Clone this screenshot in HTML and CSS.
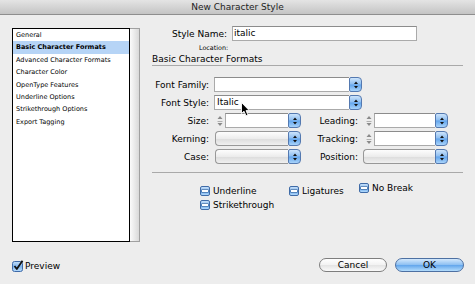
FILE: index.html
```html
<!DOCTYPE html>
<html>
<head>
<meta charset="utf-8">
<title>New Character Style</title>
<link rel="stylesheet" href="styles.css">
</head>
<body>
<div class="window">
  <div class="titlebar">New Character Style</div>
  <div class="content">
    <div class="listbox">
      <ul class="list">
        <li>General</li>
        <li class="sel">Basic Character Formats</li>
        <li>Advanced Character Formats</li>
        <li>Character Color</li>
        <li>OpenType Features</li>
        <li>Underline Options</li>
        <li>Strikethrough Options</li>
        <li>Export Tagging</li>
      </ul>
      <div class="track"></div>
    </div>
    <div class="main">
      <div class="name-row">
        <span class="name-label">Style Name:</span>
        <div class="textfield name-field">italic</div>
      </div>
      <div class="location">Location:</div>
      <div class="section-title">Basic Character Formats</div>
      <div class="form">
        <div class="row">
          <span class="lbl">Font Family:</span>
          <div class="combo wide"><div class="combo-body"></div><span class="arrow-btn"><svg width="4" height="8" viewBox="0 0 4 8"><path d="M2 0.5L4 3H0Z M2 7.5L0 5H4Z" fill="#111"/></svg></span></div>
        </div>
        <div class="row">
          <span class="lbl">Font Style:</span>
          <div class="combo wide"><div class="combo-body">Italic</div><span class="arrow-btn"><svg width="4" height="8" viewBox="0 0 4 8"><path d="M2 0.5L4 3H0Z M2 7.5L0 5H4Z" fill="#111"/></svg></span></div>
        </div>
        <div class="row">
          <span class="lbl">Size:</span>
          <div class="field1">
            <span class="stepper"><svg width="6" height="12" viewBox="0 0 6 12"><path d="M3 1L5.5 4H0.5Z M3 11L0.5 8H5.5Z" fill="#8a8a8a"/><path d="M0.5 6.5H5.5" stroke="#b0b0b0" stroke-width="1"/></svg></span>
            <div class="combo grow"><div class="combo-body"></div><span class="arrow-btn"><svg width="4" height="8" viewBox="0 0 4 8"><path d="M2 0.5L4 3H0Z M2 7.5L0 5H4Z" fill="#111"/></svg></span></div>
          </div>
          <span class="lbl">Leading:</span>
          <div class="field2">
            <span class="stepper"><svg width="6" height="12" viewBox="0 0 6 12"><path d="M3 1L5.5 4H0.5Z M3 11L0.5 8H5.5Z" fill="#8a8a8a"/><path d="M0.5 6.5H5.5" stroke="#b0b0b0" stroke-width="1"/></svg></span>
            <div class="combo grow"><div class="combo-body"></div><span class="arrow-btn"><svg width="4" height="8" viewBox="0 0 4 8"><path d="M2 0.5L4 3H0Z M2 7.5L0 5H4Z" fill="#111"/></svg></span></div>
          </div>
        </div>
        <div class="row">
          <span class="lbl">Kerning:</span>
          <div class="field1">
            <div class="popup"><div class="popup-body"></div><span class="arrow-btn"><svg width="4" height="8" viewBox="0 0 4 8"><path d="M2 0.5L4 3H0Z M2 7.5L0 5H4Z" fill="#111"/></svg></span></div>
          </div>
          <span class="lbl">Tracking:</span>
          <div class="field2">
            <span class="stepper"><svg width="6" height="12" viewBox="0 0 6 12"><path d="M3 1L5.5 4H0.5Z M3 11L0.5 8H5.5Z" fill="#8a8a8a"/><path d="M0.5 6.5H5.5" stroke="#b0b0b0" stroke-width="1"/></svg></span>
            <div class="combo grow"><div class="combo-body"></div><span class="arrow-btn"><svg width="4" height="8" viewBox="0 0 4 8"><path d="M2 0.5L4 3H0Z M2 7.5L0 5H4Z" fill="#111"/></svg></span></div>
          </div>
        </div>
        <div class="row">
          <span class="lbl">Case:</span>
          <div class="field1">
            <div class="popup"><div class="popup-body"></div><span class="arrow-btn"><svg width="4" height="8" viewBox="0 0 4 8"><path d="M2 0.5L4 3H0Z M2 7.5L0 5H4Z" fill="#111"/></svg></span></div>
          </div>
          <span class="lbl">Position:</span>
          <div class="field2">
            <div class="popup"><div class="popup-body"></div><span class="arrow-btn"><svg width="4" height="8" viewBox="0 0 4 8"><path d="M2 0.5L4 3H0Z M2 7.5L0 5H4Z" fill="#111"/></svg></span></div>
          </div>
        </div>
      </div>
      <div class="sep"></div>
      <div class="checks">
        <label class="chk"><span class="box mixed"></span>Underline</label>
        <label class="chk"><span class="box mixed"></span>Ligatures</label>
        <label class="chk raised"><span class="box mixed"></span>No Break</label>
        <label class="chk"><span class="box mixed"></span>Strikethrough</label>
      </div>
    </div>
  </div>
  <div class="footer">
    <label class="preview"><svg class="check-icon" width="12" height="12" viewBox="0 0 12 12"><rect x="0.5" y="1.5" width="10" height="10" rx="2" fill="url(#cg)" stroke="#3e6aa8"/><defs><linearGradient id="cg" x1="0" y1="0" x2="0" y2="1"><stop offset="0" stop-color="#c6e0fa"/><stop offset="0.5" stop-color="#7fb4ee"/><stop offset="1" stop-color="#b8dcfb"/></linearGradient></defs><path d="M2.5 6L4.8 9L10.5 0.8" fill="none" stroke="#111" stroke-width="1.8" stroke-linejoin="round"/></svg>Preview</label>
    <div class="buttons">
      <div class="btn">Cancel</div>
      <div class="btn default">OK</div>
    </div>
  </div>
  <svg class="cursor" width="10" height="15" viewBox="0 0 10 15"><path d="M0.5 0.5L0.5 11.5L3 9.2L5 13.8L7 13L5 8.6L8.3 8.6Z" fill="#000" stroke="#fff" stroke-width="0.9" stroke-linejoin="round"/></svg>
</div>
</body>
</html>
```

FILE: styles.css
```css
* { box-sizing: border-box; }

body {
  margin: 0;
  background: #ededed;
  font-family: "DejaVu Sans", sans-serif;
  font-size: 9px;
  color: #000;
}

.window {
  position: relative;
  width: 475px;
  height: 284px;
  overflow: hidden;
  background: #ededed;
}

.titlebar {
  height: 15px;
  line-height: 14px;
  text-align: center;
  color: #1e1e1e;
  background: linear-gradient(#e4e4e4, #c4c4c4);
  border-bottom: 1px solid #8e8e8e;
}

.content {
  display: flex;
  align-items: flex-start;
  padding: 11px 0 0 12px;
}

.listbox {
  display: flex;
  flex: none;
  width: 128px;
  height: 214px;
  margin-top: 2px;
}

.list {
  flex: none;
  width: 118px;
  height: 214px;
  margin: 0;
  padding: 0;
  list-style: none;
  background: #fff;
  border: 1px solid #000;
  font-size: 6.5px;
}

.list li {
  height: 12.4px;
  line-height: 12.4px;
  padding-left: 3px;
  white-space: nowrap;
}

.list li.sel {
  background: #b6d4f6;
  font-weight: bold;
}

.track {
  flex: 1;
  border: 1px solid #a0a0a0;
  border-left: none;
  background: linear-gradient(90deg, #fbfbfb, #d9d9d9);
}

.main {
  flex: none;
  width: 311px;
  margin-left: 12px;
}

.name-row {
  display: flex;
  align-items: center;
  height: 15px;
}

.name-label {
  width: 75px;
  margin-right: 5px;
  text-align: right;
}

.textfield {
  height: 15px;
  line-height: 13px;
  padding-left: 1px;
  background: #fff;
  border: 1px solid #aaa;
  border-top-color: #8c8c8c;
}

.name-field {
  width: 185px;
}

.location {
  margin-top: 3px;
  height: 8px;
  line-height: 8px;
  padding-left: 47px;
  font-size: 6.4px;
}

.section-title {
  margin-top: 2px;
  height: 12px;
  line-height: 11px;
  border-bottom: 1px solid #a9a9a9;
}

.form {
  display: flex;
  flex-direction: column;
  gap: 3px;
  margin-top: 11px;
}

.row {
  display: flex;
  align-items: center;
  height: 15px;
}

.lbl {
  flex: none;
  width: 57px;
  margin-right: 5px;
  text-align: right;
  white-space: nowrap;
}

.field1 {
  display: flex;
  align-items: center;
  flex: none;
  width: 87px;
}

.field2 {
  display: flex;
  align-items: center;
  flex: none;
  width: 85px;
}

.stepper {
  display: flex;
  justify-content: center;
  flex: none;
  width: 11px;
}

.combo {
  display: flex;
  height: 15px;
}

.combo.wide { width: 148px; }
.combo.grow { flex: 1; }

.combo-body {
  flex: 1;
  line-height: 13px;
  padding-left: 2px;
  background: #fff;
  border: 1px solid #aaa;
  border-top-color: #8c8c8c;
  border-right: none;
}

.arrow-btn {
  display: flex;
  align-items: center;
  justify-content: center;
  flex: none;
  width: 13px;
  height: 15px;
  border: 1px solid #5479b0;
  border-radius: 2px 4px 4px 2px;
  background: linear-gradient(#cde4fb, #8cbdf1 48%, #62a4eb 52%, #a8d3fb);
}

.popup {
  display: flex;
  width: 86px;
  height: 15px;
  margin-left: 1px;
}

.field2 .popup {
  width: 85px;
  margin-left: 0;
}

.popup-body {
  flex: 1;
  border: 1px solid #989898;
  border-right: none;
  border-radius: 4px 0 0 4px;
  background: linear-gradient(#fdfdfd, #ececec 50%, #dcdcdc 52%, #f0f0f0);
}

.sep {
  margin-top: 8px;
  border-top: 1px solid #a9a9a9;
}

.checks {
  display: grid;
  grid-template-columns: 89px 70px auto;
  row-gap: 4px;
  margin-top: 13px;
  padding-left: 48px;
}

.chk {
  display: flex;
  align-items: center;
  height: 10px;
  white-space: nowrap;
}

.chk.raised {
  margin-top: -3px;
}

.box {
  display: flex;
  align-items: center;
  justify-content: center;
  flex: none;
  width: 10px;
  height: 10px;
  margin-right: 3px;
  border: 1px solid #3f6ba7;
  border-radius: 2px;
  background: linear-gradient(#c6e0fa, #86b9ef 48%, #5fa2ea 52%, #b4dafb);
}

.box.mixed::after {
  content: "";
  display: block;
  width: 6px;
  height: 2px;
  background: #fff;
  box-shadow: 0 0 0 0.5px #2f5486;
}

.footer {
  display: flex;
  align-items: center;
  justify-content: space-between;
  height: 14px;
  margin-top: 16px;
  padding: 0 11px 0 12px;
}

.preview {
  display: flex;
  align-items: center;
  gap: 1px;
  margin-top: 1px;
}

.check-icon {
  flex: none;
}

.buttons {
  display: flex;
  gap: 8px;
}

.btn {
  width: 68px;
  height: 14px;
  line-height: 12px;
  text-align: center;
  border: 1px solid #7e7e7e;
  border-radius: 7px;
  background: linear-gradient(#ffffff, #f2f2f2 50%, #e4e4e4 52%, #fafafa);
}

.btn.default {
  width: 69px;
  border-color: #4d70a2;
  background: linear-gradient(#d3e8fc, #8ec0f2 48%, #62a6ec 52%, #b3dcfc);
}

.cursor {
  position: absolute;
  left: 241px;
  top: 102px;
}
```
